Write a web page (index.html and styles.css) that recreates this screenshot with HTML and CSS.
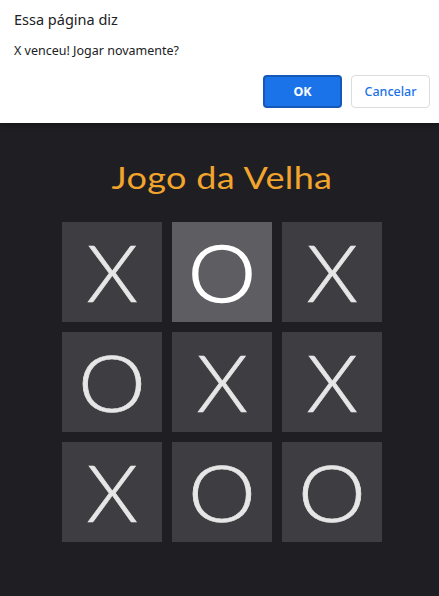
FILE: index.html
```html
<!DOCTYPE html>
<html lang="pt-BR">
<head>
<meta charset="utf-8">
<title>Jogo da Velha</title>
<link rel="stylesheet" href="styles.css">
</head>
<body>
<div class="dialog">
  <div class="dialog-title">Essa página diz</div>
  <div class="dialog-msg">X venceu! Jogar novamente?</div>
  <div class="dialog-actions">
    <button class="btn btn-ok">OK</button>
    <button class="btn btn-cancel">Cancelar</button>
  </div>
</div>
<main class="game">
  <h1 class="title"><span class="title-text">Jogo da Velha</span></h1>
  <div class="board">
    <div class="cell"><span class="mark x">X</span></div>
    <div class="cell hover"><span class="mark o">O</span></div>
    <div class="cell"><span class="mark x">X</span></div>
    <div class="cell"><span class="mark o">O</span></div>
    <div class="cell"><span class="mark x">X</span></div>
    <div class="cell"><span class="mark x">X</span></div>
    <div class="cell"><span class="mark x">X</span></div>
    <div class="cell"><span class="mark o">O</span></div>
    <div class="cell"><span class="mark o">O</span></div>
  </div>
</main>
</body>
</html>
```
FILE: styles.css
```css
html, body {
  margin: 0;
  padding: 0;
  background: #1f1e23;
  height: 100%;
  overflow: hidden;
}
.dialog {
  background: #ffffff;
  height: 123px;
  box-sizing: border-box;
  padding: 9px 9px 0 14px;
  font-family: "Noto Sans", "Open Sans", sans-serif;
  color: #202124;
  box-shadow: 0 2px 6px rgba(0,0,0,0.35);
}
.dialog-title {
  font-size: 14.5px;
  line-height: 20px;
  margin-bottom: 13px;
}
.dialog-msg {
  font-size: 12.5px;
  line-height: 18px;
}
.dialog-actions {
  display: flex;
  justify-content: flex-end;
  gap: 9px;
  margin-top: 15px;
}
.btn {
  font-family: "Noto Sans", "Open Sans", sans-serif;
  font-size: 12.5px;
  height: 33px;
  width: 79px;
  border-radius: 4px;
  box-sizing: border-box;
  padding: 0;
}
.btn-ok {
  background: #1a73e8;
  color: #ffffff;
  font-weight: 700;
  border: 2px solid #1558b8;
}
.btn-cancel {
  background: #ffffff;
  color: #1a73e8;
  border: 1px solid #dadce0;
  font-weight: 500;
}
.game {
  display: flex;
  flex-direction: column;
  align-items: center;
  padding-left: 5px;
}
.title {
  margin: 37px 0 0;
  font-family: "Lato", sans-serif;
  font-weight: 400;
  font-size: 30px;
  line-height: 34px;
  color: #f2a52d;
}
.title-text {
  display: inline-block;
  transform: scaleX(1.2);
  letter-spacing: 0.3px;
}
.board {
  margin-top: 28px;
  display: grid;
  grid-template-columns: repeat(3, 100px);
  grid-template-rows: repeat(3, 100px);
  gap: 10px;
}
.cell {
  background: #3e3d42;
  color: #e6e6e6;
  display: flex;
  align-items: center;
  justify-content: center;
  font-family: "Lato", sans-serif;
  font-weight: 300;
  font-size: 78px;
  line-height: 1;
  -webkit-text-stroke: 0.7px #e6e6e6;
}
.mark {
  display: inline-block;
}
.mark.x {
  transform: scaleX(1.06);
}
.mark.o {
  transform: scaleX(1.1);
}
.cell.hover {
  background: #5e5d62;
  color: #ffffff;
  -webkit-text-stroke: 1.5px #ffffff;
}
```
